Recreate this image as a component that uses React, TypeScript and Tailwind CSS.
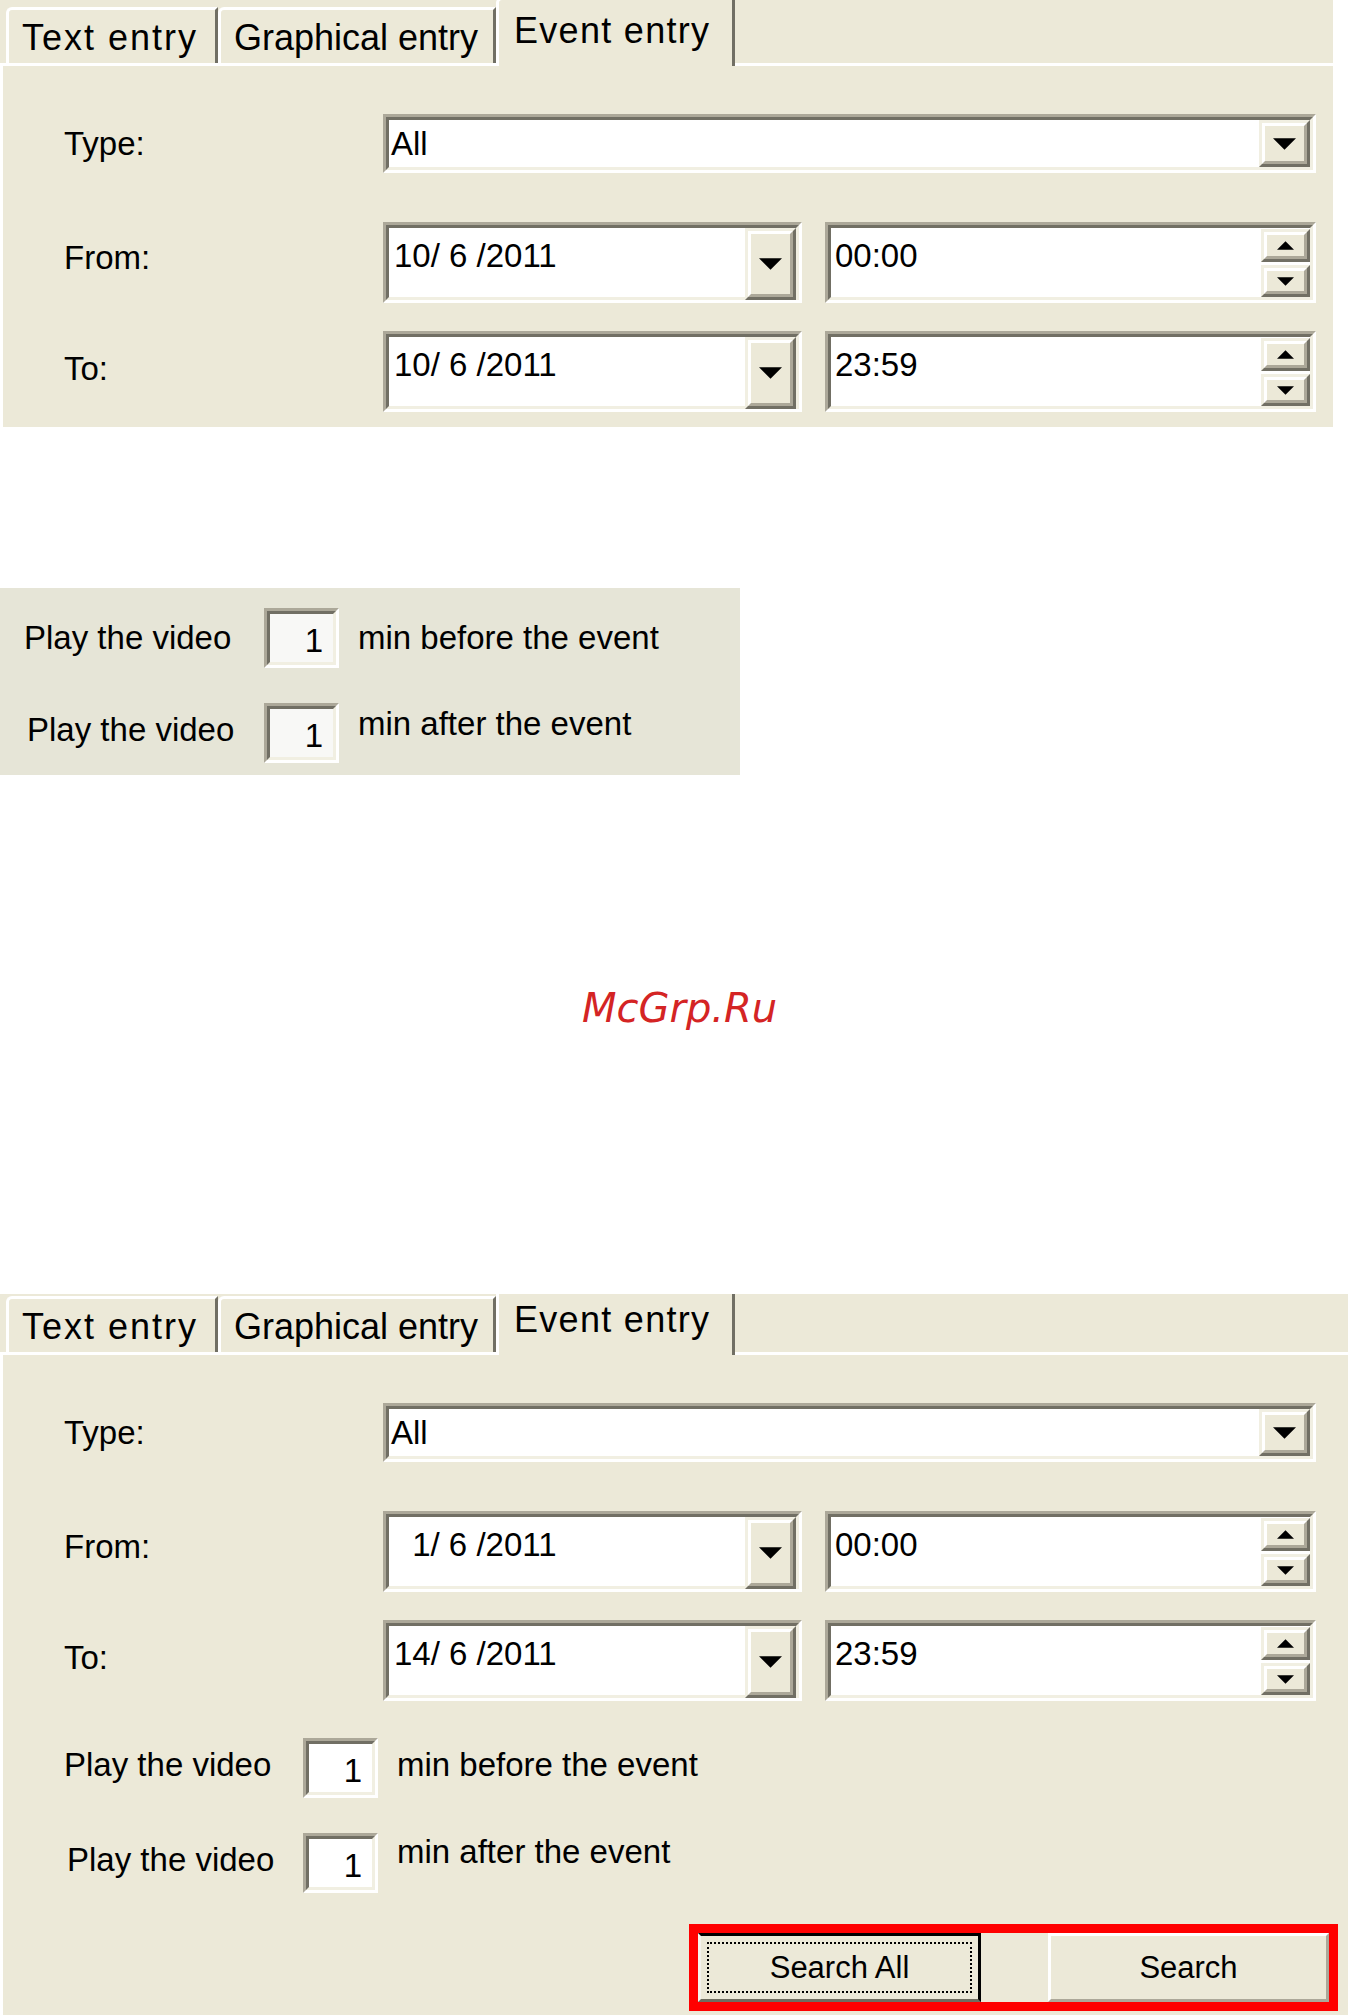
import React from "react";

const FONT = { fontFamily: '"Liberation Sans", Arial, sans-serif' };

function DownTri({ w = 23, h = 12 }: { w?: number; h?: number }) {
  return (
    <svg width={w} height={h} viewBox="0 0 10 5" className="block">
      <polygon points="0,0 10,0 5,5" fill="#000" />
    </svg>
  );
}

function UpTri({ w = 17, h = 9 }: { w?: number; h?: number }) {
  return (
    <svg width={w} height={h} viewBox="0 0 10 5" className="block">
      <polygon points="0,5 10,5 5,0" fill="#000" />
    </svg>
  );
}

function Raised({ className, children }: { className: string; children?: React.ReactNode }) {
  return (
    <div
      className={
        "border-t-[3px] border-l-[3px] border-b-[3px] border-r-[3px] border-t-[#F1EFE2] border-l-[#F1EFE2] border-b-[#716F64] border-r-[#716F64] " +
        className
      }
    >
      <div className="w-full h-full border-t-[3px] border-l-[3px] border-b-[3px] border-r-[3px] border-t-white border-l-white border-b-[#ACA899] border-r-[#ACA899] bg-[#ECE9D8] flex items-center justify-center">
        {children}
      </div>
    </div>
  );
}

function Sunken({
  className,
  innerClass,
  children,
}: {
  className: string;
  innerClass: string;
  children?: React.ReactNode;
}) {
  return (
    <div
      className={
        "border-t-[3px] border-l-[3px] border-b-[3px] border-r-[3px] border-t-[#ACA899] border-l-[#ACA899] border-b-white border-r-white " +
        className
      }
    >
      <div
        className={
          "w-full h-full border-t-[3px] border-l-[3px] border-b-[3px] border-r-[3px] border-t-[#716F64] border-l-[#716F64] border-b-[#F1EFE2] border-r-[#F1EFE2] flex " +
          innerClass
        }
      >
        {children}
      </div>
    </div>
  );
}

function Combo() {
  return (
    <Sunken className="w-[933px] h-[59px]" innerClass="bg-white items-stretch">
      <div className="flex-1 flex items-center pl-[2px] text-[33px] leading-[36px] text-black">All</div>
      <Raised className="w-[51px] h-full">
        <DownTri />
      </Raised>
    </Sunken>
  );
}

function DateBox({ value, pad }: { value: string; pad: string }) {
  return (
    <Sunken className="w-[419px] h-[81px]" innerClass="bg-white items-stretch">
      <div className={"flex-1 pt-[10px] text-[33px] leading-[36px] text-black whitespace-pre " + pad}>{value}</div>
      <Raised className="w-[51px] h-[72px]">
        <DownTri />
      </Raised>
    </Sunken>
  );
}

function TimeBox({ value }: { value: string }) {
  return (
    <Sunken className="w-[491px] h-[81px]" innerClass="bg-white items-stretch">
      <div className="flex-1 pl-[4px] pt-[10px] text-[33px] leading-[36px] text-black">{value}</div>
      <div className="flex flex-col w-[49px] pt-[1px] gap-[3px]">
        <Raised className="w-full h-[34px]">
          <UpTri />
        </Raised>
        <Raised className="w-full h-[32px]">
          <DownTri w={17} h={9} />
        </Raised>
      </div>
    </Sunken>
  );
}

function NumBox({ bg }: { bg: string }) {
  return (
    <Sunken className="w-[75px] h-[60px]" innerClass={"items-end justify-end pr-[10px] pb-[3px] " + bg}>
      <span className="text-[33px] leading-[36px] text-black">1</span>
    </Sunken>
  );
}

function Tab({ label, active, w }: { label: string; active?: boolean; w: string }) {
  if (active) {
    return (
      <div
        className={
          "relative z-10 -mb-[3px] h-[69px] bg-[#ECE9D8] border-t-[3px] border-l-[3px] border-r-[3px] border-t-white border-l-white border-r-[#716F64] rounded-tl-[6px] pl-[15px] pt-[11px] text-[36px] leading-[40px] text-black whitespace-nowrap " +
          w
        }
      >
        {label}
      </div>
    );
  }
  return (
    <div
      className={
        "h-[56px] bg-[#ECE9D8] border-t-[3px] border-l-[3px] border-r-[3px] border-t-white border-l-white border-r-[#716F64] rounded-tl-[6px] pl-[13px] pt-[8px] text-[36px] leading-[40px] text-black whitespace-nowrap " +
        w
      }
    >
      {label}
    </div>
  );
}

function DateRows({ from, fromPad, to }: { from: string; fromPad: string; to: string }) {
  return (
    <>
      <div className="flex items-center mt-[48px]">
        <div className="w-[319px] text-[33px] leading-[36px] text-black">Type:</div>
        <Combo />
      </div>
      <div className="flex items-start mt-[49px]">
        <div className="w-[319px] mt-[18px] text-[33px] leading-[36px] text-black">From:</div>
        <DateBox value={from} pad={fromPad} />
        <div className="ml-[23px]">
          <TimeBox value="00:00" />
        </div>
      </div>
      <div className="flex items-start mt-[28px]">
        <div className="w-[319px] mt-[20px] text-[33px] leading-[36px] text-black">To:</div>
        <DateBox value={to} pad="pl-[5px]" />
        <div className="ml-[23px]">
          <TimeBox value="23:59" />
        </div>
      </div>
    </>
  );
}

function TabStrip({ h }: { h: string }) {
  return (
    <div className={"flex items-end pl-[6px] " + h}>
      <Tab label="Text entry" w="w-[212px] tracking-[2px]" />
      <Tab label="Graphical entry" w="w-[278px]" />
      <Tab label="Event entry" w="w-[239px] tracking-[1.3px]" active />
    </div>
  );
}

function PlayRow({
  text,
  labelClass,
  mt,
  bg,
  textClass,
  labelW,
}: {
  text: string;
  labelClass: string;
  mt: string;
  bg: string;
  textClass: string;
  labelW: string;
}) {
  return (
    <div className={"flex items-center " + mt}>
      <div className={"text-[33px] leading-[36px] text-black whitespace-nowrap " + labelW + " " + labelClass}>
        Play the video
      </div>
      <NumBox bg={bg} />
      <div className={"ml-[19px] text-[33px] leading-[36px] text-black whitespace-nowrap " + textClass}>{text}</div>
    </div>
  );
}

export default function App() {
  return (
    <div className="w-[1348px] h-[2015px] bg-white overflow-hidden" style={FONT}>
      {/* Top panel */}
      <div className="w-[1333px] h-[427px] bg-[#ECE9D8] overflow-hidden flex flex-col">
        <TabStrip h="h-[63px]" />
        <div className="flex-1 border-t-[3px] border-l-[3px] border-white pl-[61px]">
          <DateRows from="10/ 6 /2011" fromPad="pl-[5px]" to="10/ 6 /2011" />
        </div>
      </div>

      {/* Middle panel */}
      <div className="mt-[161px] w-[740px] h-[187px] bg-[#E6E5D7] pl-[24px] pt-[20px]">
        <PlayRow
          text="min before the event"
          labelClass=""
          labelW="w-[240px]"
          mt=""
          bg="bg-[#F8F8F6]"
          textClass=""
        />
        <PlayRow
          text="min after the event"
          labelClass="pl-[3px] -translate-y-[3px]"
          labelW="w-[240px]"
          mt="mt-[35px]"
          bg="bg-[#F8F8F6]"
          textClass="-translate-y-[9px]"
        />
      </div>

      {/* Watermark */}
      <div className="h-[519px] pt-[213px] pl-[582px]">
        <div
          className="text-[40px] leading-[40px] italic text-[#D42424] whitespace-nowrap"
          style={{ fontFamily: '"DejaVu Sans", Verdana, sans-serif' }}
        >
          McGrp.Ru
        </div>
      </div>

      {/* Bottom panel */}
      <div className="w-[1348px] h-[721px] bg-[#ECE9D8] overflow-hidden flex flex-col">
        <TabStrip h="h-[58px]" />
        <div className="flex-1 border-t-[3px] border-l-[3px] border-white pl-[61px]">
          <DateRows from=" 1/ 6 /2011" fromPad="pl-[14px]" to="14/ 6 /2011" />
          <PlayRow
            text="min before the event"
            labelClass="-translate-y-[3px]"
            labelW="w-[239px]"
            mt="mt-[37px]"
            bg="bg-white"
            textClass="-translate-y-[3px]"
          />
          <PlayRow
            text="min after the event"
            labelClass="pl-[3px] -translate-y-[3px]"
            labelW="w-[239px]"
            mt="mt-[35px]"
            bg="bg-white"
            textClass="-translate-y-[11px]"
          />
          <div className="mt-[31px] ml-[625px] w-[649px] h-[87px] border-[9px] border-[#FF0000] flex justify-between">
            <div className="w-[283px] h-full border-t-[3px] border-r-[3px] border-l-[3px] border-b-[3px] border-t-black border-r-black border-l-[#F4F3EE] border-b-[#6F6D60] bg-[#ECE9D8] p-[6px]">
              <div className="w-full h-full border-[2px] border-dotted border-black flex items-center justify-center text-[31px] leading-[36px] text-black">
                Search All
              </div>
            </div>
            <div className="w-[281px] h-full border-t-[3px] border-l-[3px] border-b-[3px] border-r-[3px] border-t-white border-l-white border-b-[#ACA899] border-r-[#ACA899] bg-[#ECE9D8] flex items-center justify-center text-[31px] leading-[36px] text-black">
              Search
            </div>
          </div>
        </div>
      </div>
    </div>
  );
}
